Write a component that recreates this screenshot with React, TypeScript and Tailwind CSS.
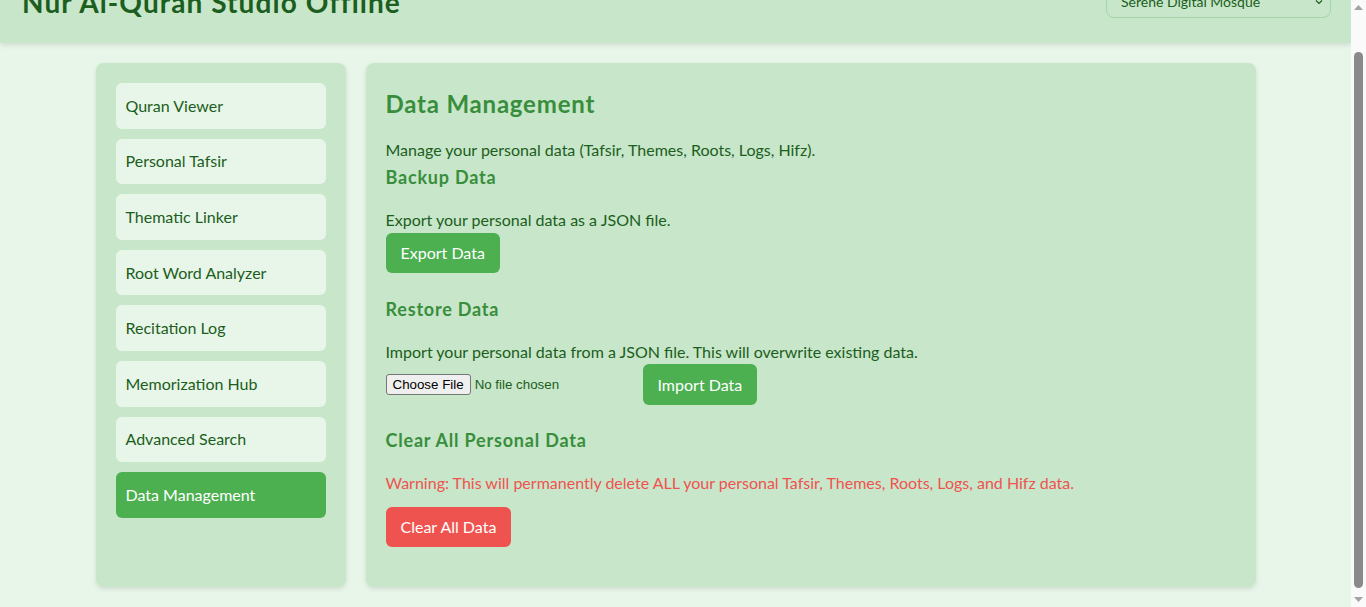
import { useLayoutEffect, useState } from "react"

const tabs = [
  "Quran Viewer",
  "Personal Tafsir",
  "Thematic Linker",
  "Root Word Analyzer",
  "Recitation Log",
  "Memorization Hub",
  "Advanced Search",
  "Data Management",
]

function FakeScrollbar() {
  // classic scrollbar drawn over the right edge, as in the reference
  return (
    <div className="fixed top-0 right-0 w-[15px] h-screen bg-[#fafafa] flex flex-col items-center">
      <div className="h-[15px] flex items-center justify-center">
        <svg width="9" height="6" viewBox="0 0 9 6">
          <path d="M4.5 0L9 5H0z" fill="#a3a3a3" />
        </svg>
      </div>
      <div className="flex-1 w-full flex flex-col items-center pt-[37px] pb-[4px]">
        <div className="flex-1 w-[9px] rounded-full bg-[#8a8a8a]" />
      </div>
      <div className="h-[15px] flex items-center justify-center">
        <svg width="9" height="6" viewBox="0 0 9 6">
          <path d="M0 0H9L4.5 5z" fill="#a3a3a3" />
        </svg>
      </div>
    </div>
  )
}

export default function App() {
  const [active, setActive] = useState("Data Management")

  // page in the reference is scrolled to the bottom
  useLayoutEffect(() => {
    window.scrollTo(0, document.documentElement.scrollHeight)
  }, [])

  return (
    <div className="min-h-screen bg-[#e8f5e9]">
      <div className="mr-[15px] text-[#1b5e20] font-['Lato',sans-serif]">
        {/* Header */}
        <header className="h-[82px] bg-[#c8e6c9] shadow-[0_2px_5px_rgba(0,0,0,0.1)] flex items-center justify-between px-5">
          <h1 className="ml-0.5 text-[28px] leading-9 font-bold tracking-[1.1px] text-[#1b5e20]">
            Nur Al-Quran Studio Offline
          </h1>
          <div className="relative w-[225px] h-[31px] border border-[#a5d6a7] rounded-lg flex items-center px-[14px] text-sm text-[#1b5e20]">
            Serene Digital Mosque
            <svg className="absolute right-[5px] w-3 h-3" viewBox="0 0 12 12">
              <path d="M3 4.5l3 3 3-3" fill="none" stroke="#1b5e20" strokeWidth="1.2" />
            </svg>
          </div>
        </header>

        {/* Body */}
        <div className="max-w-[1160px] mx-auto flex gap-5 pt-5 pb-5">
          {/* Sidebar */}
          <nav className="w-[250px] shrink-0 bg-[#c8e6c9] rounded-lg shadow-[0_2px_5px_rgba(0,0,0,0.1)] p-5 flex flex-col gap-[10px]">
            {tabs.map(t => (
              <button
                key={t}
                onClick={() => setActive(t)}
                className={
                  t === active
                    ? "h-[45.6px] rounded-md bg-[#4caf50] text-white text-left pl-[10px] text-base"
                    : "h-[45.6px] rounded-md bg-[#e8f5e9] text-[#1b5e20] text-left pl-[10px] text-base"
                }
              >
                {t}
              </button>
            ))}
          </nav>

          {/* Main */}
          <main className="flex-1 bg-[#c8e6c9] rounded-lg shadow-[0_2px_5px_rgba(0,0,0,0.1)] px-5 pt-5 pb-10">
            <h2 className="mt-[5px] text-2xl leading-8 font-bold tracking-[0.8px] text-[#388e3c]">Data Management</h2>
            <p className="mt-[19px] text-base leading-[22px]">
              Manage your personal data (Tafsir, Themes, Roots, Logs, Hifz).
            </p>

            <h3 className="mt-1 text-lg leading-6 font-bold tracking-[0.8px] text-[#388e3c]">Backup Data</h3>
            <p className="mt-[20px] text-base leading-[22px]">Export your personal data as a JSON file.</p>
            <button className="mt-[2px] px-[15px] py-[10px] leading-5 rounded-md bg-[#4caf50] text-white text-base">
              Export Data
            </button>

            <h3 className="mt-6 text-lg leading-6 font-bold tracking-[0.8px] text-[#388e3c]">Restore Data</h3>
            <p className="mt-[20px] text-base leading-[22px]">
              Import your personal data from a JSON file. This will overwrite existing data.
            </p>
            <div className="mt-px flex items-center gap-1">
              <label className="w-[253px] flex items-center gap-1 font-['Liberation_Sans',sans-serif] text-[13.33px] cursor-pointer">
                <span className="h-[21px] px-[6px] flex items-center bg-[#efefef] border border-[#767676] rounded-[3px] text-black">
                  Choose File
                </span>
                <span className="text-[#1b5e20]">No file chosen</span>
                <input type="file" accept=".json" className="hidden" />
              </label>
              <button className="px-[15px] py-[10px] leading-[21px] rounded-md bg-[#4caf50] text-white text-base">
                Import Data
              </button>
            </div>

            <h3 className="mt-[23px] text-lg leading-6 font-bold tracking-[0.8px] text-[#388e3c]">Clear All Personal Data</h3>
            <p className="mt-[20px] text-base leading-[22px] text-[#ef5350]">
              Warning: This will permanently delete ALL your personal Tafsir, Themes, Roots, Logs, and Hifz data.
            </p>
            <button className="mt-[13px] px-[15px] py-[10px] leading-5 rounded-md bg-[#ef5350] text-white text-base">
              Clear All Data
            </button>
          </main>
        </div>
      </div>
      <FakeScrollbar />
    </div>
  )
}
